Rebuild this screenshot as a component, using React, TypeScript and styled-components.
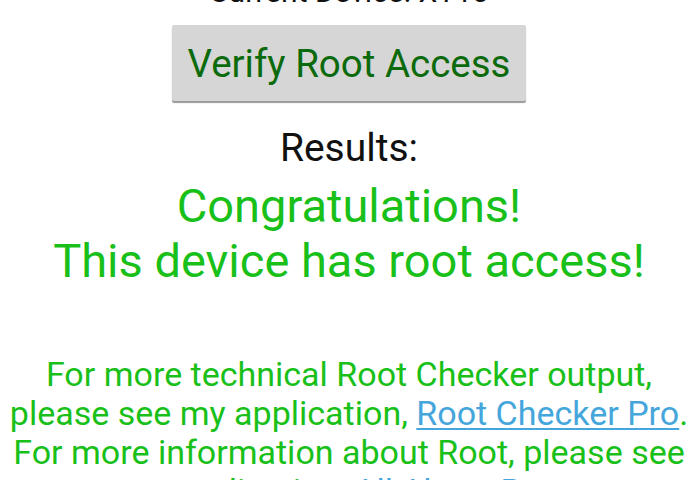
import React from "react";
import styled, { createGlobalStyle } from "styled-components";

const Global = createGlobalStyle`
  html, body { margin: 0; padding: 0; background: #ffffff; overflow: hidden; }
  body { font-family: Roboto, "Noto Sans", sans-serif; }
`;

const Screen = styled.div`
  width: 698px;
  height: 480px;
  overflow: hidden;
  display: flex;
  flex-direction: column;
  align-items: center;
  text-align: center;
`;

const Column = styled.div`
  display: flex;
  flex-direction: column;
  align-items: center;
  margin-top: -26px;
`;

const DeviceLine = styled.div`
  font-size: 30px;
  line-height: 36px;
  color: #111;
  white-space: nowrap;
`;

const VerifyButton = styled.button`
  margin-top: 15px;
  width: 354px;
  height: 76px;
  border: none;
  border-radius: 2px;
  background: #d6d6d6;
  box-shadow: 0 2px 1px #9a9a9a;
  color: #0b6a0b;
  font-family: Roboto, sans-serif;
  font-size: 38.5px;
  padding: 0;
  white-space: nowrap;
`;

const Label = styled.div`
  margin-top: 26px;
  font-size: 39px;
  line-height: 42px;
  color: #111;
`;

const Headline = styled.div`
  margin-top: 9px;
  font-size: 47px;
  line-height: 55px;
  color: #19c019;
  white-space: nowrap;
`;

const Info = styled.p`
  margin: 67px 0 0;
  font-size: 34px;
  line-height: 39px;
  color: #19c019;
  white-space: nowrap;
`;

const Link = styled.a`
  color: #45a6dc;
  text-decoration: underline;
  text-underline-offset: 3px;
  text-decoration-thickness: 2px;
`;

export default function App() {
  return (
    <>
      <Global />
      <Screen>
        <Column>
          <DeviceLine>Current Device: XT10</DeviceLine>
          <VerifyButton>Verify Root Access</VerifyButton>
          <Label>Results:</Label>
          <Headline>
            Congratulations!
            <br />
            This device has root access!
          </Headline>
          <Info>
            For more technical Root Checker output,
            <br />
            please see my application, <Link>Root Checker Pro</Link>.
            <br />
            For more information about Root, please see
            <br />
            my application, <Link>All About Root</Link>.
          </Info>
        </Column>
      </Screen>
    </>
  );
}
